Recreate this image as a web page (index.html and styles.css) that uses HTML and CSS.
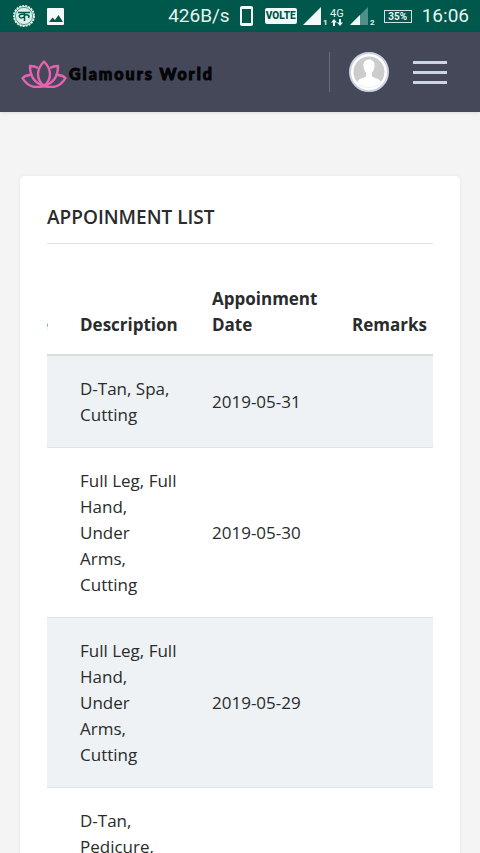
FILE: index.html
```html
<!DOCTYPE html>
<html lang="en">
<head>
<meta charset="utf-8">
<meta name="viewport" content="width=device-width, initial-scale=1">
<title>Glamours World</title>
<link rel="stylesheet" href="styles.css">
</head>
<body>
<div class="screen">
  <div class="status">
    <svg class="coin" viewBox="0 0 24 24" width="24" height="24" aria-hidden="true">
      <circle cx="12" cy="12" r="10" fill="#dcefe9" stroke="#dcefe9" stroke-width="2" stroke-dasharray="2 1"/>
      <circle cx="12" cy="12" r="8.600" fill="none" stroke="#00574b" stroke-width=".6"/>
      <path d="M6 8.500h12M12.500 8.500v8.500M12.500 10.500c-3.500-1-6 .5-5 2.500.8 1.500 3.500 1 5-.5M12.500 11.500c3-1.500 5.500 0 4 2.500" fill="none" stroke="#00574b" stroke-width="1.500"/>
    </svg>
    <svg class="photo" viewBox="0 0 18 18" width="18" height="18" aria-hidden="true">
      <rect x="1" y="1" width="17" height="17" rx="1" fill="#f2fbf9"/>
      <path d="M3 15l3.500-4.500L9 13l3.500-5L17 15z" fill="#00574b"/>
    </svg>
    <span class="speed">426B/s</span>
    <svg class="phone" viewBox="0 0 14 22" width="14" height="22" aria-hidden="true">
      <rect x="0" y="1" width="13" height="20" rx="2" fill="#f2fbf9"/>
      <rect x="2" y="4" width="9" height="14" fill="#00574b"/>
    </svg>
    <span class="volte">VOLTE</span>
    <svg class="signal" viewBox="0 0 74 24" width="74" height="24" aria-hidden="true">
      <path d="M0 21L18 3v18z" fill="#f2fbf9"/>
      <path d="M31 23v-3.500h-2l3-3.500 3 3.500h-2V23zM39 16v3.500h2L38 23l-3-3.500h2V16z" transform="translate(-1 -1)" fill="#f2fbf9"/>
      <path d="M47 21L65 3v18z" fill="#4f9188"/>
      <path d="M47 21L57 11v10z" fill="#f2fbf9"/>
      <text x="20" y="21" font-size="8" font-weight="700">1</text>
      <text x="27" y="13" font-size="11">4G</text>
      <text x="67" y="21" font-size="8" font-weight="700">2</text>
    </svg>
    <span class="battery">35%</span>
    <span class="clock">16:06</span>
  </div>

  <header class="bar">
    <a class="brand" href="#">
      <svg viewBox="0 0 46 28" width="46" height="28" aria-hidden="true" fill="none" stroke="#e763b2" stroke-width="2.400" stroke-linejoin="round">
        <path d="M23 1.500c-8 8-8 18 0 24.500 8-6.500 8-16.500 0-24.500z"/>
        <path d="M17 8c-2.500-1.500-5-2-8-2 0 9 4 17 14 20 10-3 14-11 14-20-3 0-5.500.5-8 2"/>
        <path d="M9.500 15c-3 0-6 1-8 3 4 7 11 11 21.500 8 10.500 3 17.500-1 21.500-8-2-2-5-3-8-3"/>
      </svg>
      <span class="brand-name">Glamours World</span>
    </a>
    <div class="tools">
      <a class="user" href="#" aria-label="Account">
        <svg viewBox="0 0 40 40" width="40" height="40" aria-hidden="true">
          <circle cx="20" cy="20" r="19" fill="#fff" stroke="#ccd2de" stroke-width="2"/>
          <circle cx="20" cy="20" r="15.500" fill="#ccc"/>
          <path d="M20 7.500c-4 0-5.500 2.500-5.500 6 0 3.500 1.200 5.500 2.700 7.500v3c-1 2-7 2-9.200 5.800a15.500 15.500 0 0 0 24 0c-2.200-3.800-8.200-3.800-9.200-5.800v-3c1.500-2 2.700-4 2.700-7.500 0-3.500-1.500-6-5.500-6z" fill="#fff"/>
        </svg>
      </a>
      <button class="menu" type="button" aria-label="Menu"><span></span><span></span><span></span></button>
    </div>
  </header>

  <main class="content">
    <section class="card">
      <h1>APPOINMENT LIST</h1>
      <div class="table-wrap">
        <table>
          <colgroup><col class="c-edge"><col class="c-desc"><col class="c-date"><col class="c-rem"></colgroup>
          <thead>
            <tr><th class="edge"><div>e</div></th><th>Description</th><th>Appoinment Date</th><th>Remarks</th></tr>
          </thead>
          <tbody>
            <tr><td></td><td>D-Tan, Spa, Cutting</td><td>2019-05-31</td><td></td></tr>
            <tr><td></td><td>Full Leg, Full Hand, Under Arms, Cutting</td><td>2019-05-30</td><td></td></tr>
            <tr><td></td><td>Full Leg, Full Hand, Under Arms, Cutting</td><td>2019-05-29</td><td></td></tr>
            <tr><td></td><td>D-Tan, Pedicure,</td><td></td><td></td></tr>
          </tbody>
        </table>
      </div>
    </section>
  </main>
</div>
</body>
</html>
```
FILE: styles.css
```css
* { box-sizing: border-box; }
body {
  margin: 0;
  background: #f4f4f4;
  color: #292b2c;
  font: 17px/26px "Open Sans", sans-serif;
}
.screen { height: 100vh; overflow: hidden; }

.status {
  display: flex;
  align-items: center;
  height: 32px;
  padding: 0 11px 0 12px;
  background: #00574b;
  color: #e4f5f1;
  font-family: Roboto, sans-serif;
}
.status svg { flex: none; }
.photo { margin-left: 10px; }
.speed { margin-left: auto; font-size: 19px; }
.phone { margin-left: 10px; }
.volte {
  margin-left: 11px;
  width: 32px;
  border-radius: 2px;
  background: #f2fbf9;
  color: #00574b;
  font-size: 10px;
  font-weight: 900;
  line-height: 16px;
  text-align: center;
}
.signal { margin-left: 6px; }
.signal text { fill: #e4f5f1; font-family: Roboto, sans-serif; }
.battery {
  margin-left: 7px;
  width: 28px;
  border: 1px solid #cfe5e0;
  font-size: 10px;
  font-weight: 700;
  line-height: 11px;
  text-align: center;
}
.clock { margin-left: 10px; font-size: 19px; }

.bar {
  display: flex;
  align-items: center;
  justify-content: space-between;
  height: 80px;
  padding: 0 33px 0 21px;
  background: #444859;
  box-shadow: 0 1px 3px rgba(0, 0, 0, .1);
}
.brand { display: flex; align-items: center; gap: 2px; text-decoration: none; }
.brand svg { margin-top: 3px; }
.brand-name {
  padding-top: 3px;
  color: #050507;
  font-family: Lato, sans-serif;
  font-size: 16px;
  font-weight: 900;
  letter-spacing: 2px;
  -webkit-text-stroke: 1px #050507;
}
.tools { display: flex; align-items: center; }
.user { display: flex; padding-left: 19px; border-left: 1px solid #6b6e7b; }
.menu {
  display: flex;
  flex-direction: column;
  gap: 7px;
  margin-left: 24px;
  padding: 0;
  border: 0;
  background: none;
}
.menu span { width: 34px; height: 3px; background: #ccd5e3; }

.content { padding: 64px 20px 0; }
.card {
  padding: 26px 27px;
  border-radius: 5px;
  background: #fff;
  box-shadow: 0 0 4px rgba(0, 0, 0, .06);
}
h1 {
  margin: 0;
  padding: 2px 0 13px;
  border-bottom: 1px solid #dedfe0;
  font-size: 19px;
  font-weight: 600;
  line-height: 26px;
}
.table-wrap { margin-top: 22px; overflow: hidden; }
table { width: 397px; table-layout: fixed; border-spacing: 0; }
.c-edge { width: 17px; }
.c-desc { width: 132px; }
.c-date { width: 140px; }
.c-rem { width: 108px; }
th, td { padding: 20px 16px 19px; text-align: left; vertical-align: middle; }
th { padding-bottom: 16px; border-bottom: 2px solid #d9dfe1; font-weight: 700; vertical-align: bottom; }
td { border-bottom: 1px solid #dfe3e6; }
th:first-child, td:first-child { padding-left: 0; padding-right: 16px; }
.edge div { display: flex; justify-content: flex-end; overflow: hidden; }
tbody tr:nth-child(odd) { background: #eef2f5; }
```
